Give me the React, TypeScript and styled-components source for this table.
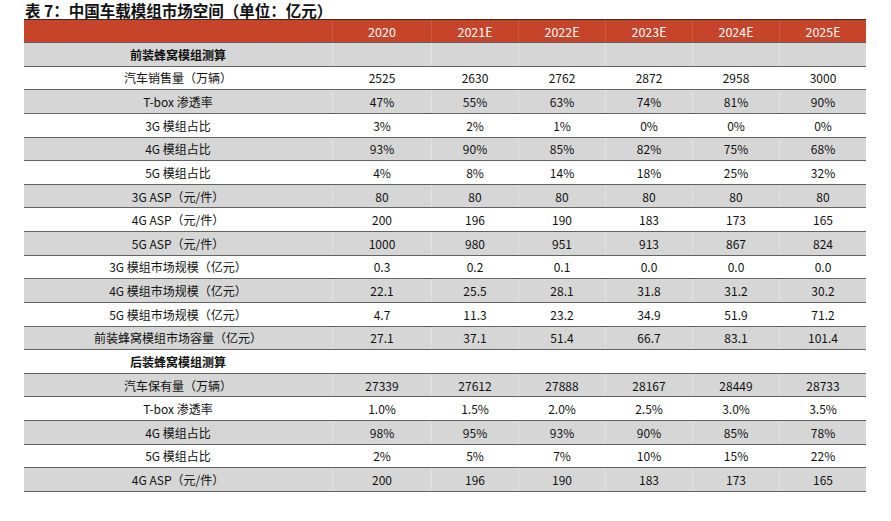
import styled, { createGlobalStyle } from 'styled-components'

const GlobalStyle = createGlobalStyle`
  html, body {
    margin: 0;
    padding: 0;
    background: #ffffff;
  }
  body {
    font-family: "Noto Sans CJK SC", "Noto Sans", sans-serif;
    color: #111;
  }
`

const years = ['2020', '2021E', '2022E', '2023E', '2024E', '2025E']

type Row = { label: string; values?: string[]; section?: boolean }

const rows: Row[] = [
    {label: '前装蜂窝模组测算', section: true},
    {label: '汽车销售量（万辆）', values: ['2525', '2630', '2762', '2872', '2958', '3000']},
    {label: 'T-box 渗透率', values: ['47%', '55%', '63%', '74%', '81%', '90%']},
    {label: '3G 模组占比', values: ['3%', '2%', '1%', '0%', '0%', '0%']},
    {label: '4G 模组占比', values: ['93%', '90%', '85%', '82%', '75%', '68%']},
    {label: '5G 模组占比', values: ['4%', '8%', '14%', '18%', '25%', '32%']},
    {label: '3G ASP（元/件）', values: ['80', '80', '80', '80', '80', '80']},
    {label: '4G ASP（元/件）', values: ['200', '196', '190', '183', '173', '165']},
    {label: '5G ASP（元/件）', values: ['1000', '980', '951', '913', '867', '824']},
    {label: '3G 模组市场规模（亿元）', values: ['0.3', '0.2', '0.1', '0.0', '0.0', '0.0']},
    {label: '4G 模组市场规模（亿元）', values: ['22.1', '25.5', '28.1', '31.8', '31.2', '30.2']},
    {label: '5G 模组市场规模（亿元）', values: ['4.7', '11.3', '23.2', '34.9', '51.9', '71.2']},
    {label: '前装蜂窝模组市场容量（亿元）', values: ['27.1', '37.1', '51.4', '66.7', '83.1', '101.4']},
    {label: '后装蜂窝模组测算', section: true},
    {label: '汽车保有量（万辆）', values: ['27339', '27612', '27888', '28167', '28449', '28733']},
    {label: 'T-box 渗透率', values: ['1.0%', '1.5%', '2.0%', '2.5%', '3.0%', '3.5%']},
    {label: '4G 模组占比', values: ['98%', '95%', '93%', '90%', '85%', '78%']},
    {label: '5G 模组占比', values: ['2%', '5%', '7%', '10%', '15%', '22%']},
    {label: '4G ASP（元/件）', values: ['200', '196', '190', '183', '173', '165']},
]

function App() {
    return (
        <>
            <GlobalStyle/>
            <Page>
                <Title>表 7：中国车载模组市场空间（单位：亿元）</Title>
                <Table>
                    <HeadRow>
                        <Cell/>
                        {years.map(y => <HeadCell key={y}>{y}</HeadCell>)}
                    </HeadRow>
                    {rows.map((r, i) => (
                        <BodyRow key={i} $shaded={i % 2 === 0}>
                            <Cell $bold={r.section}>{r.label}</Cell>
                            {years.map((y, j) => (
                                <ValueCell key={y} $shaded={i % 2 === 0}>
                                    {r.values ? r.values[j] : ''}
                                </ValueCell>
                            ))}
                        </BodyRow>
                    ))}
                </Table>
            </Page>
        </>
    )
}

export default App

const Page = styled.div`
  width: 891px;
  height: 521px;
  padding-left: 24px;
  box-sizing: border-box;
`

const Title = styled.div`
  font-size: 15.5px;
  font-weight: bold;
  line-height: 18px;
  height: 18px;
  padding-top: 1px;
  padding-left: 1px;
  color: #111;
  white-space: nowrap;
`

const Table = styled.div`
  width: 842px;
  display: flex;
  flex-direction: column;
`

const gridCols = `308px 99px repeat(5, 87px)`

const HeadRow = styled.div`
  display: grid;
  grid-template-columns: ${gridCols};
  height: 24px;
  box-sizing: border-box;
  background: #c5442a;
  border-top: 1px solid #3a2a26;
  border-bottom: 1.5px solid #5e5e5e;
  color: #ffffff;
`

const BodyRow = styled.div<{ $shaded: boolean }>`
  display: grid;
  grid-template-columns: ${gridCols};
  height: 23.63px;
  box-sizing: border-box;
  background: ${p => (p.$shaded ? '#d6d6d6' : '#ffffff')};
  border-bottom: 1.5px solid #636363;
`

const Cell = styled.div<{ $bold?: boolean }>`
  display: flex;
  align-items: center;
  justify-content: center;
  font-size: 12px;
  font-weight: ${p => (p.$bold ? 'bold' : 'normal')};
  white-space: nowrap;
`

const HeadCell = styled(Cell)`
  font-size: 12.5px;
  border-left: 1px solid rgba(255, 255, 255, 0.12);
`

const ValueCell = styled(Cell)<{ $shaded: boolean }>`
  border-left: 1px solid ${p => (p.$shaded ? '#e2e2e2' : '#ffffff')};
`
